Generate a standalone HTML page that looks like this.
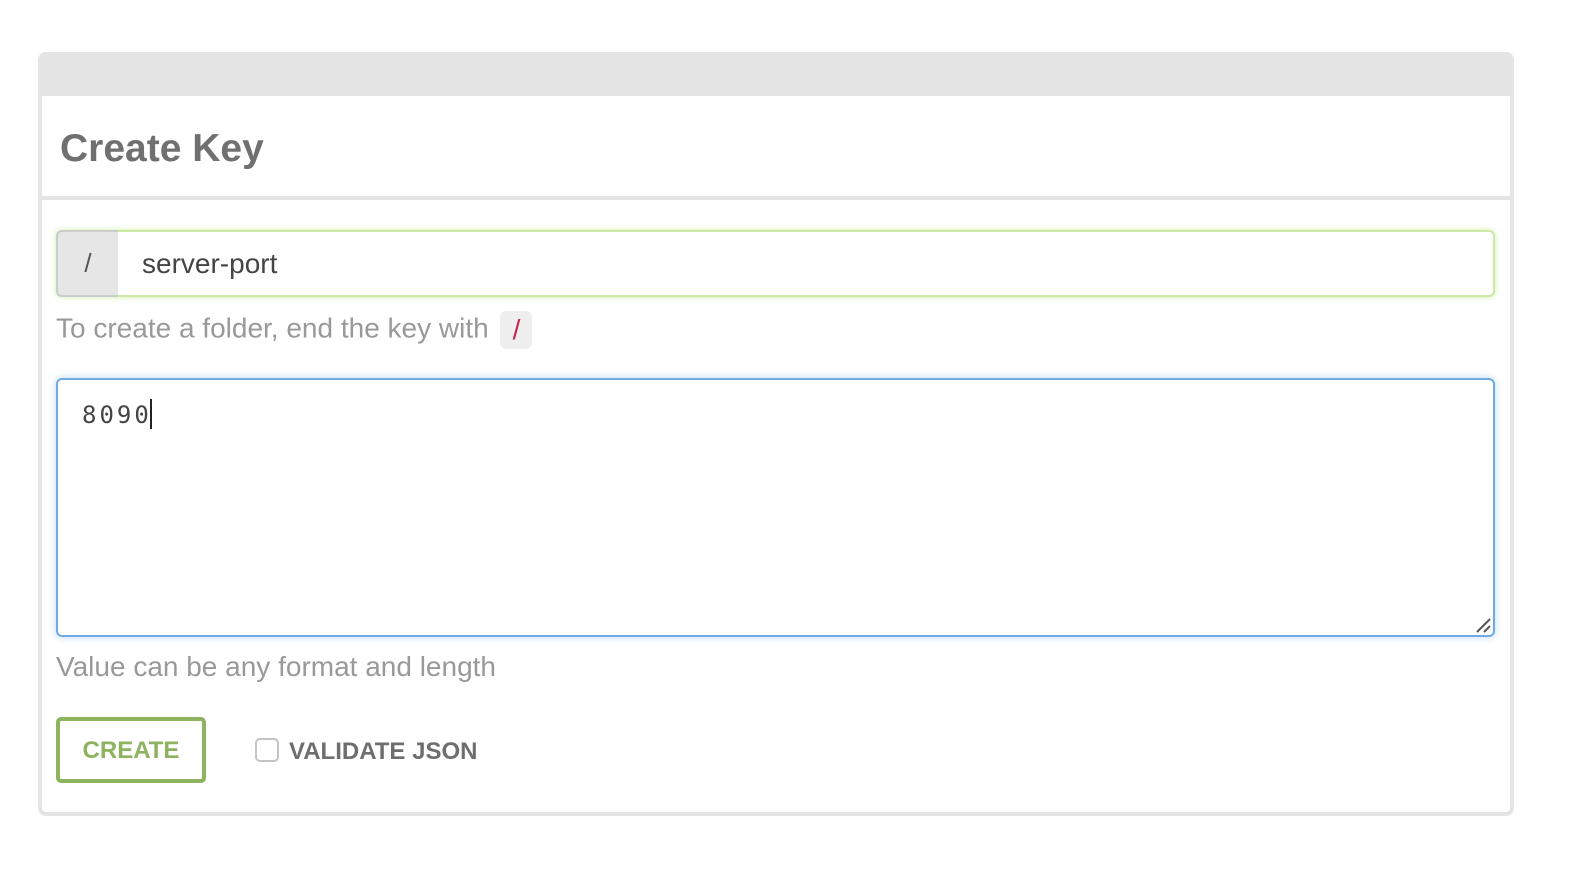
<!DOCTYPE html>
<html><head><style>
*{box-sizing:border-box;margin:0;padding:0}
body{width:1570px;height:884px;background:#fff;font-family:"Liberation Sans",sans-serif;position:relative;overflow:hidden}
.panel{position:absolute;left:38px;top:52px;width:1476px;height:764px;border:4px solid #e5e5e5;border-top:none;border-radius:8px;background:#fff}
.hdr{position:absolute;left:-4px;top:0;width:1476px;height:44px;background:#e5e5e5;border-radius:8px 8px 0 0}
.title{position:absolute;left:18px;top:75px;font-size:39px;color:#707070;font-weight:bold;letter-spacing:0px}
.sep{position:absolute;left:0;top:144px;width:1468px;height:4px;background:#e5e5e5}
.inp{position:absolute;left:14px;top:178px;width:1439px;height:67px;border:2px solid #cde9a6;border-radius:6px;box-shadow:0 0 6px rgba(170,230,110,0.6);background:#fff}
.addon{position:absolute;left:-2px;top:-2px;width:62px;height:67px;background:#e6e6e6;border:2px solid #ccc;border-right:none;border-radius:6px 0 0 6px;font-size:26px;color:#555;text-align:center;line-height:62px}
.inp .val{position:absolute;left:84px;top:16px;font-size:28px;color:#444}
.help1{position:absolute;left:14px;top:259px;font-size:28px;color:#999}
.code{display:inline-block;width:32px;height:38px;background:#eee;border-radius:6px;color:#c7254e;text-align:center;line-height:38px;vertical-align:middle;margin-left:4px}
.ta{position:absolute;left:14px;top:326px;width:1439px;height:259px;border:2px solid #72a9e4;border-radius:6px;box-shadow:0 0 8px rgba(102,175,233,0.45)}
.ta .v{position:absolute;left:24px;top:19px;font-family:"DejaVu Sans Mono","Liberation Mono",monospace;font-size:24px;color:#444;letter-spacing:3px}
.ta .v span{display:inline-block;width:2px;height:30px;background:#222;vertical-align:-6px;margin-left:-2px}
.help2{position:absolute;left:14px;top:599px;font-size:28px;color:#999}
.btn{position:absolute;left:14px;top:665px;width:150px;height:66px;border:4px solid #8db35e;border-radius:5px;color:#8db35e;font-weight:bold;font-size:24px;text-align:center;line-height:60px}
.cb{position:absolute;left:213px;top:686px;width:24px;height:24px;border:2px solid #c4c4c4;border-radius:5px;background:#fff}
.cbl{position:absolute;left:247px;top:686px;font-size:24px;font-weight:bold;color:#6e6e6e}
</style></head><body>
<div class="panel">
<div class="hdr"></div>
<div class="title">Create Key</div>
<div class="sep"></div>
<div class="inp"><div class="addon">/</div><div class="val">server-port</div></div>
<div class="help1">To create a folder, end the key with <span class="code">/</span></div>
<div class="ta"><div class="v">8090<span></span></div>
<svg style="position:absolute;right:2px;bottom:2px" width="16" height="16"><path d="M2 15L15 2M9 15L15 9" stroke="#555" stroke-width="2"/></svg></div>
<div class="help2">Value can be any format and length</div>
<div class="btn">CREATE</div>
<div class="cb"></div>
<div class="cbl">VALIDATE JSON</div>
</div>
</body></html>
